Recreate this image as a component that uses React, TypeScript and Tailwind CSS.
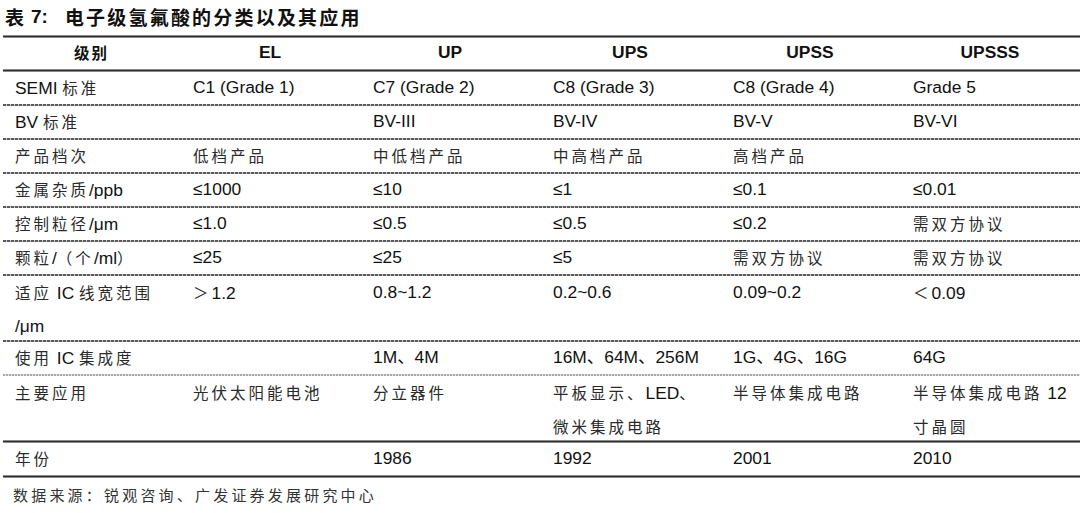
import React from "react";

const Z = ({ children }: { children: React.ReactNode }) => (
  <span className="font-['Noto_Sans_CJK_SC',sans-serif] text-[15.5px] tracking-[3px] text-[#2a2a2a] font-normal">
    {children}
  </span>
);

const Dash = ({ light }: { light?: boolean }) =>
  light ? (
    <div className="h-[2px] bg-[image:repeating-linear-gradient(90deg,#a8a8a8_0px,#a8a8a8_2px,#e6e6e6_2px,#e6e6e6_3px)]" />
  ) : (
    <div className="h-[2px] bg-[image:repeating-linear-gradient(90deg,#5a5a5a_0px,#5a5a5a_3px,#c8c8c8_3px,#c8c8c8_4px)]" />
  );

const Solid = () => (
  <div className="h-[3px] border-y border-[#8a8a8a] bg-[#2e2e2e]" />
);

type Cells = React.ReactNode[];

const Row = ({ cells, tall }: { cells: Cells; tall?: boolean }) => (
  <div
    className={
      tall
        ? "grid grid-cols-[177px_repeat(5,180px)] h-[64px] leading-[32.5px] text-[17.4px] text-[#111]"
        : "grid grid-cols-[177px_repeat(5,180px)] h-[32px] leading-[30px] text-[17.4px] text-[#111]"
    }
  >
    {cells.map((c, i) => (
      <div key={i} className={i === 0 ? "pl-[12px] whitespace-nowrap" : "pl-[13px] whitespace-nowrap"}>
        {c}
      </div>
    ))}
  </div>
);

export default function App() {
  return (
    <div className="w-[1080px] h-[513px] bg-white font-['Liberation_Sans','Noto_Sans_CJK_SC',sans-serif] overflow-hidden">
      <div className="h-[35px] pl-[5px] flex items-center font-bold text-[19px] text-[#111]">
        <span className="font-['Noto_Sans_CJK_SC',sans-serif]">表</span>
        <span className="ml-[7px]">7:</span>
        <span className="ml-[17px] font-['Noto_Sans_CJK_SC',sans-serif] tracking-[2.2px]">
          电子级氢氟酸的分类以及其应用
        </span>
      </div>
      <div className="pl-[3px]">
        <Solid />
        <div className="grid grid-cols-[177px_repeat(5,180px)] h-[31px] leading-[29px] text-[17.4px] font-bold text-[#111] text-center">
          <div>
            <span className="font-['Noto_Sans_CJK_SC',sans-serif] text-[15.5px] tracking-[2px] font-bold">级别</span>
          </div>
          <div>EL</div>
          <div>UP</div>
          <div>UPS</div>
          <div>UPSS</div>
          <div>UPSSS</div>
        </div>
        <Solid />
        <Row cells={[<>SEMI <Z>标准</Z></>, "C1 (Grade 1)", "C7 (Grade 2)", "C8 (Grade 3)", "C8 (Grade 4)", "Grade 5"]} />
        <Dash />
        <Row cells={[<>BV <Z>标准</Z></>, "", "BV-III", "BV-IV", "BV-V", "BV-VI"]} />
        <Dash />
        <Row cells={[<Z>产品档次</Z>, <Z>低档产品</Z>, <Z>中低档产品</Z>, <Z>中高档产品</Z>, <Z>高档产品</Z>, ""]} />
        <Dash />
        <Row cells={[<><Z>金属杂质</Z>/ppb</>, "≤1000", "≤10", "≤1", "≤0.1", "≤0.01"]} />
        <Dash />
        <Row cells={[<><Z>控制粒径</Z>/μm</>, "≤1.0", "≤0.5", "≤0.5", "≤0.2", <Z>需双方协议</Z>]} />
        <Dash />
        <Row cells={[<><Z>颗粒</Z>/<Z>（个</Z>/ml<Z>）</Z></>, "≤25", "≤25", "≤5", <Z>需双方协议</Z>, <Z>需双方协议</Z>]} />
        <Dash />
        <Row
          tall
          cells={[
            <><Z>适应</Z> IC <Z>线宽范围</Z><br />/μm</>,
            <><Z>＞</Z>1.2</>,
            "0.8~1.2",
            "0.2~0.6",
            "0.09~0.2",
            <><Z>＜</Z>0.09</>,
          ]}
        />
        <Dash />
        <Row cells={[<><Z>使用</Z> IC <Z>集成度</Z></>, "", "1M、4M", "16M、64M、256M", "1G、4G、16G", "64G"]} />
        <Dash light />
        <Row
          tall
          cells={[
            <Z>主要应用</Z>,
            <Z>光伏太阳能电池</Z>,
            <Z>分立器件</Z>,
            <><Z>平板显示、</Z>LED<Z>、</Z><br /><Z>微米集成电路</Z></>,
            <Z>半导体集成电路</Z>,
            <><Z>半导体集成电路</Z> 12<br /><Z>寸晶圆</Z></>,
          ]}
        />
        <Solid />
        <Row cells={[<Z>年份</Z>, "", "1986", "1992", "2001", "2010"]} />
        <Solid />
      </div>
      <div className="pl-[13px] pt-[5px] text-[15px] leading-[24px] font-['Noto_Sans_CJK_SC',sans-serif] tracking-[3.2px] text-[#333]">
        数据来源：锐观咨询、广发证券发展研究中心
      </div>
    </div>
  );
}
